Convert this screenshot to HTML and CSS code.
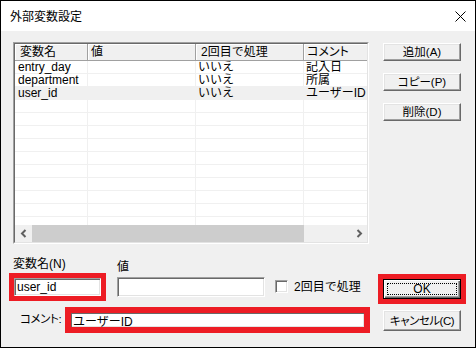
FILE: index.html
```html
<!DOCTYPE html>
<html lang="ja">
<head>
<meta charset="utf-8">
<title>外部変数設定</title>
<link rel="stylesheet" href="styles.css">
</head>
<body>
<div class="window">
  <header class="titlebar">
    <span class="title">外部変数設定</span>
    <svg class="close" width="11" height="11" viewBox="0 0 11 11"><path d="M0.5 0.5 L10.5 10.5 M10.5 0.5 L0.5 10.5" stroke="#000" stroke-width="1" fill="none"/></svg>
  </header>
  <main class="body">
    <section class="top">
      <div class="listview">
        <div class="lv-inner">
          <div class="lv-head">
            <div class="th w1 p1">変数名</div>
            <div class="th w2 p2">値</div>
            <div class="th w3 p3">2回目で処理</div>
            <div class="th w4 p4 kana">コメント</div>
          </div>
          <div class="lv-rows">
            <div class="tr"><div class="td w1 c1">entry_day</div><div class="td w2"></div><div class="td w3">いいえ</div><div class="td w4">記入日</div></div>
            <div class="tr"><div class="td w1 c1">department</div><div class="td w2"></div><div class="td w3">いいえ</div><div class="td w4">所属</div></div>
            <div class="tr sel"><div class="td w1 c1">user_id</div><div class="td w2"></div><div class="td w3">いいえ</div><div class="td w4">ユーザーID</div></div>
            <div class="tr"><div class="td w1"></div><div class="td w2"></div><div class="td w3"></div><div class="td w4"></div></div>
            <div class="tr"><div class="td w1"></div><div class="td w2"></div><div class="td w3"></div><div class="td w4"></div></div>
            <div class="tr"><div class="td w1"></div><div class="td w2"></div><div class="td w3"></div><div class="td w4"></div></div>
            <div class="tr"><div class="td w1"></div><div class="td w2"></div><div class="td w3"></div><div class="td w4"></div></div>
            <div class="tr"><div class="td w1"></div><div class="td w2"></div><div class="td w3"></div><div class="td w4"></div></div>
            <div class="tr"><div class="td w1"></div><div class="td w2"></div><div class="td w3"></div><div class="td w4"></div></div>
            <div class="tr"><div class="td w1"></div><div class="td w2"></div><div class="td w3"></div><div class="td w4"></div></div>
            <div class="tr"><div class="td w1"></div><div class="td w2"></div><div class="td w3"></div><div class="td w4"></div></div>
            <div class="tr"><div class="td w1"></div><div class="td w2"></div><div class="td w3"></div><div class="td w4"></div></div>
            <div class="tr"><div class="td w1"></div><div class="td w2"></div><div class="td w3"></div><div class="td w4"></div></div>
          </div>
          <div class="hscroll">
            <div class="sb-btn"><svg width="17" height="17" viewBox="0 0 17 17"><path d="M10.5 5 L7 8.5 L10.5 12" stroke="#606060" stroke-width="2" fill="none"/></svg></div>
            <div class="sb-thumb"></div>
            <div class="sb-track"></div>
            <div class="sb-btn"><svg width="17" height="17" viewBox="0 0 17 17"><path d="M7.5 5 L11 8.5 L7.5 12" stroke="#606060" stroke-width="2" fill="none"/></svg></div>
          </div>
        </div>
      </div>
      <div class="side">
        <button class="btn btn-side">追加(A)</button>
        <button class="btn btn-side">コピー(P)</button>
        <button class="btn btn-side">削除(D)</button>
      </div>
    </section>

    <section class="row1">
      <div class="field f-name">
        <label class="lbl lbl-name">変数名(N)</label>
        <input class="edit edit-name hl" type="text" value="user_id">
      </div>
      <div class="field f-value">
        <label class="lbl lbl-value">値</label>
        <input class="edit edit-value" type="text" value="">
      </div>
      <div class="checkrow">
        <span class="check"></span>
        <span class="check-lbl">2回目で処理</span>
      </div>
      <button class="btn btn-ok hl"><span class="focus">OK</span></button>
    </section>

    <section class="row2">
      <label class="lbl lbl-comment">コメント:</label>
      <input class="edit edit-comment hl-comment" type="text" value="ユーザーID">
      <button class="btn btn-cancel">キャンセル(C)</button>
    </section>
  </main>
</div>
</body>
</html>
```

FILE: styles.css
```css
* { box-sizing: border-box; }
html, body { margin: 0; padding: 0; background: #fff; }
body {
  font-family: "Liberation Sans", "Noto Sans CJK JP", sans-serif;
  font-size: 12px;
  color: #000;
}

.kana { font-feature-settings: "palt"; }

.window {
  width: 476px;
  height: 348px;
  border: 1px solid #000;
  background: #f0f0f0;
  display: flex;
  flex-direction: column;
}

.titlebar {
  height: 30px;
  flex: none;
  background: #fff;
  display: flex;
  align-items: center;
  justify-content: space-between;
  padding: 0 9px 0 9px;
}
.title {
  font-family: "Noto Sans CJK JP", sans-serif;
  font-size: 12px;
  line-height: 16px;
}
.close { display: block; }

.body {
  flex: 1;
  display: flex;
  flex-direction: column;
  padding: 11px 14px 0 12px;
}

.top { display: flex; height: 202px; flex: none; }

.listview {
  width: 356px;
  height: 202px;
  border: 1px solid;
  border-color: #a0a0a0 #fff #fff #a0a0a0;
}
.lv-inner {
  height: 100%;
  border: 1px solid;
  border-color: #696969 #e3e3e3 #e3e3e3 #696969;
  background: #fff;
  display: flex;
  flex-direction: column;
  overflow: hidden;
}

.lv-head { display: flex; height: 17px; flex: none; }
.th {
  height: 17px;
  line-height: 16px;
  background: #f0f0f0;
  border-right: 1px solid #a0a0a0;
  border-bottom: 1px solid #a0a0a0;
  box-shadow: inset 1px 1px 0 #fff;
  white-space: nowrap;
  overflow: hidden;
  flex: none;
}
.w1 { width: 73px; }
.w2 { width: 108px; }
.w3 { width: 108px; }
.w4 { width: 120px; }
.p1 { padding-left: 5px; }
.p2 { padding-left: 3px; }
.p3 { padding-left: 5px; }
.p4 { padding-left: 3px; }

.lv-rows { flex: 1; overflow: hidden; }
.tr {
  display: flex;
  height: 13px;
  border-bottom: 1px solid #f0f0f0;
}
.td {
  height: 12px;
  line-height: 12px;
  padding-left: 2px;
  border-right: 1px solid #f0f0f0;
  white-space: nowrap;
  flex: none;
}
.td.c1 { padding-left: 3px; }
.tr.sel { background: #f0f0f0; }

.hscroll { display: flex; height: 17px; flex: none; background: #f0f0f0; }
.sb-btn { width: 17px; height: 17px; flex: none; }
.sb-btn svg { display: block; }
.sb-thumb { width: 272px; flex: none; background: #cdcdcd; }
.sb-track { flex: 1; }

.side {
  margin-left: 14px;
  padding-top: 1px;
  display: flex;
  flex-direction: column;
  gap: 12px;
}

.btn {
  font: inherit;
  font-size: 12px;
  line-height: 14px;
  color: #000;
  padding: 0;
  background: #f0f0f0;
  border: 1px solid;
  border-color: #fff #696969 #696969 #fff;
  box-shadow: inset -1px -1px 0 #a0a0a0, inset 1px 1px 0 #e3e3e3;
  display: flex;
  align-items: center;
  justify-content: center;
  width: 78px;
  white-space: nowrap;
  font-feature-settings: "palt";
}
.btn-side { height: 18px; font-size: 11.5px; }

.row1 { display: flex; height: 55px; flex: none; }
.field { display: flex; flex-direction: column; align-items: flex-start; }
.lbl { line-height: 16px; display: block; white-space: nowrap; }
.lbl-name { margin-top: 12px; }
.lbl-value { margin-top: 15px; }
.f-value { margin-left: 16px; }

.edit {
  font: inherit;
  font-size: 12px;
  color: #000;
  background: #fff;
  border: 1px solid;
  border-color: #a0a0a0 #fff #fff #a0a0a0;
  box-shadow: inset 1px 1px 0 #696969, inset -1px -1px 0 #e3e3e3;
  padding: 0 2px;
  margin: 0;
  outline: none;
}
.edit-name { width: 87px; height: 18px; margin-top: 6px; margin-left: 1px; }
.edit-value { width: 148px; height: 20px; margin-top: 2px; }

.hl { outline: 5px solid #ed1c24; outline-offset: 0; }
.hl-comment { outline: 6px solid #ed1c24; outline-offset: -1px; }

.checkrow {
  display: flex;
  align-items: center;
  margin-left: 10px;
  margin-top: 36px;
  height: 13px;
}
.check {
  width: 13px;
  height: 13px;
  flex: none;
  background: #fff;
  border: 1px solid;
  border-color: #a0a0a0 #fff #fff #a0a0a0;
  box-shadow: inset 1px 1px 0 #696969, inset -1px -1px 0 #e3e3e3;
}
.check-lbl { margin-left: 6px; line-height: 16px; white-space: nowrap; }

.btn-ok {
  margin-left: auto;
  margin-top: 35px;
  height: 20px;
  padding: 3px;
  border: 1px solid #000;
  box-shadow: inset 1px 1px 0 #fff, inset -1px -1px 0 #696969, inset -2px -2px 0 #a0a0a0;
}
.focus {
  flex: 1;
  align-self: stretch;
  border: 1px dotted #000;
  display: flex;
  align-items: center;
  justify-content: center;
  line-height: 12px;
}

.row2 { display: flex; align-items: flex-start; flex: none; }
.lbl-comment {
  margin-top: 12px;
  margin-left: 7px;
  width: 50px;
  flex: none;
  font-size: 11.5px;
  letter-spacing: -0.4px;
  font-feature-settings: "palt";
}
.edit-comment { width: 295px; height: 16px; margin-top: 13px; padding: 0 2px; }
.btn-cancel { margin-left: auto; margin-top: 11px; height: 21px; font-size: 11.5px; letter-spacing: -0.5px; }
```
